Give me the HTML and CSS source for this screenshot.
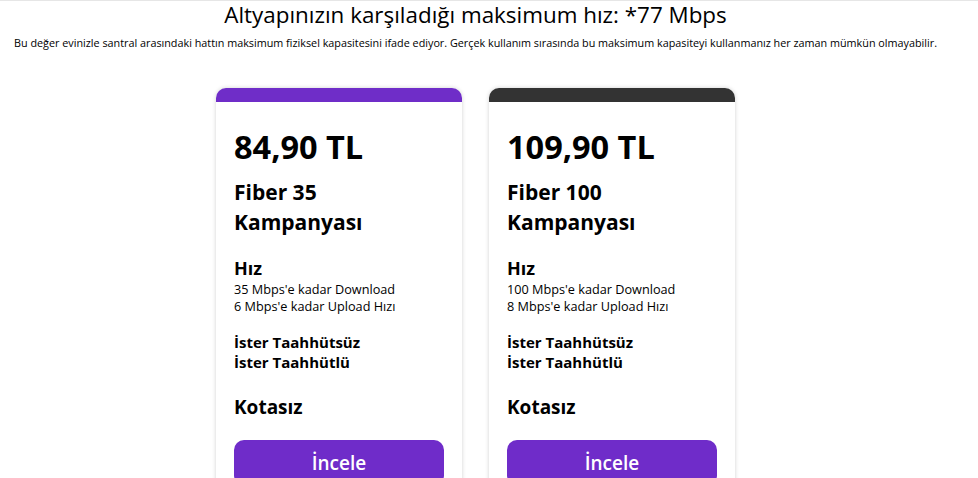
FILE: index.html
```html
<!DOCTYPE html>
<html lang="tr">
<head>
    <meta charset="UTF-8">
    <meta name="viewport" content="width=device-width, initial-scale=1.0">
    <title>Altyapı Hız Sorgulama</title>
    <link rel="stylesheet" href="styles.css">
</head>
<body>
    <div class="page">
        <h1 class="speed-title">Altyapınızın karşıladığı maksimum hız: *77 Mbps</h1>
        <p class="speed-note">Bu değer evinizle santral arasındaki hattın maksimum fiziksel kapasitesini ifade ediyor. Gerçek kullanım sırasında bu maksimum kapasiteyi kullanmanız her zaman mümkün olmayabilir.</p>

        <div class="plan-list">
            <div class="plan-card">
                <div class="plan-bar"></div>
                <div class="plan-body">
                    <div class="plan-price">84,90 TL</div>
                    <div class="plan-name">Fiber 35 Kampanyası</div>

                    <div class="plan-label">Hız</div>
                    <div class="plan-details">
                        <div>35 Mbps'e kadar Download</div>
                        <div>6 Mbps'e kadar Upload Hızı</div>
                    </div>

                    <div class="plan-terms">
                        <div>İster Taahhütsüz</div>
                        <div>İster Taahhütlü</div>
                    </div>

                    <div class="plan-quota">Kotasız</div>
                    <a href="#" class="plan-button">İncele</a>
                </div>
            </div>

            <div class="plan-card">
                <div class="plan-bar dark"></div>
                <div class="plan-body">
                    <div class="plan-price">109,90 TL</div>
                    <div class="plan-name">Fiber 100<br>Kampanyası</div>

                    <div class="plan-label">Hız</div>
                    <div class="plan-details">
                        <div>100 Mbps'e kadar Download</div>
                        <div>8 Mbps'e kadar Upload Hızı</div>
                    </div>

                    <div class="plan-terms">
                        <div>İster Taahhütsüz</div>
                        <div>İster Taahhütlü</div>
                    </div>

                    <div class="plan-quota">Kotasız</div>
                    <a href="#" class="plan-button">İncele</a>
                </div>
            </div>
        </div>
    </div>
</body>
</html>
```

FILE: styles.css
```css
/* Altyapı sonuç sayfası */
body {
    margin: 0;
    font-family: "Open Sans", Arial, sans-serif;
    color: #000;
    background-color: #fff;
    border-top: 1px solid #e6e6e6;
}

.page {
    width: 951px;
}

.speed-title {
    margin: 0;
    padding-top: 1px;
    font-size: 22.4px;
    font-weight: 400;
    line-height: 25px;
    text-align: center;
}

.speed-note {
    margin: 9px 0 0;
    font-size: 10.8px;
    line-height: 14px;
    text-align: center;
}

.plan-list {
    display: flex;
    justify-content: center;
    gap: 27px;
    margin-top: 38px;
}

.plan-card {
    width: 246px;
    height: 420px;
    background-color: #fff;
    border-radius: 10px 10px 0 0;
    box-shadow: 0 0 4px rgba(0, 0, 0, 0.18);
}

.plan-bar {
    height: 14px;
    background-color: #6f2dc8;
    border-radius: 10px 10px 0 0;
}

.plan-bar.dark {
    background-color: #333;
}

.plan-body {
    padding: 23px 18px 0;
}

.plan-price {
    font-size: 32.5px;
    font-weight: 700;
    line-height: 44px;
}

.plan-name {
    width: 150px;
    margin-top: 8px;
    font-size: 21px;
    font-weight: 700;
    line-height: 30px;
}

.plan-label {
    margin-top: 20px;
    font-size: 18px;
    font-weight: 700;
    line-height: 22px;
}

.plan-details {
    margin-top: 2px;
    font-size: 12.7px;
    line-height: 17px;
}

.plan-terms {
    margin-top: 17px;
    font-size: 15px;
    font-weight: 700;
    line-height: 20px;
}

.plan-quota {
    margin-top: 22px;
    font-size: 19px;
    font-weight: 700;
    line-height: 26px;
}

.plan-button {
    display: block;
    margin-top: 20px;
    height: 46px;
    line-height: 46px;
    border-radius: 10px;
    background-color: #6f2cc9;
    color: #fff;
    font-size: 19px;
    font-weight: 600;
    text-align: center;
    text-decoration: none;
}
```
